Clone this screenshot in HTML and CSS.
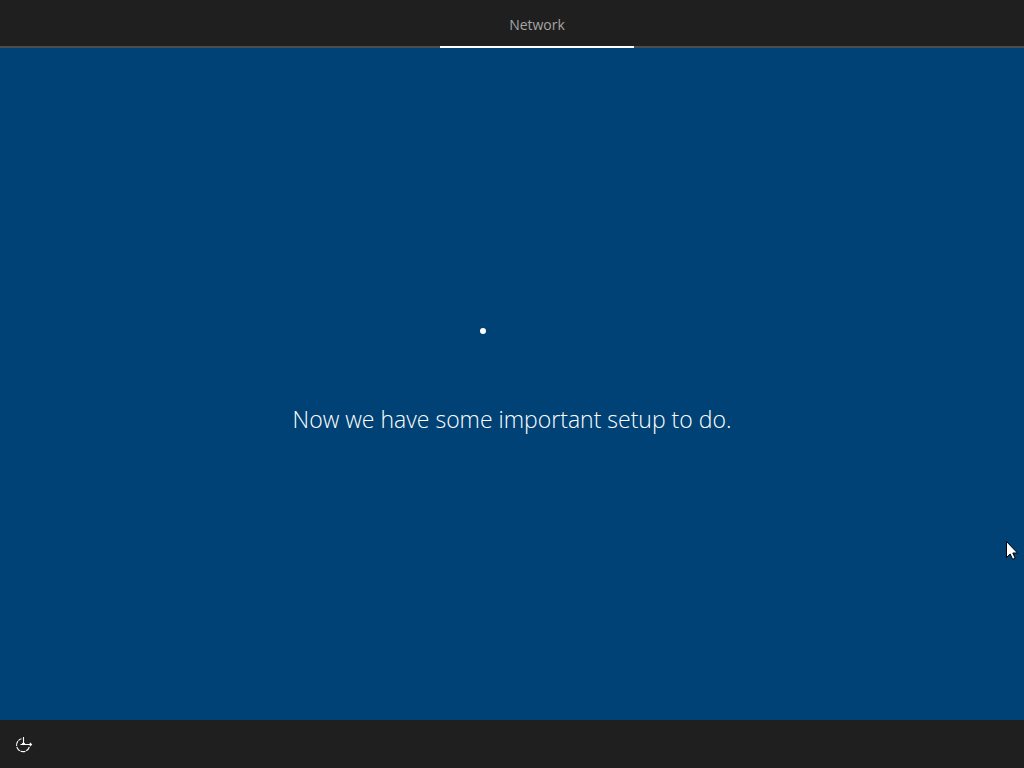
FILE: index.html
```html
<!DOCTYPE html>
<html lang="en">
<head>
<meta charset="utf-8">
<meta name="viewport" content="width=device-width, initial-scale=1">
<title>Setup</title>
<link rel="stylesheet" href="styles.css">
</head>
<body>
<div class="setup">
  <header class="steps">
    <h1 class="step">Network</h1>
  </header>
  <main class="stage">
    <div class="spinner"><span class="dot"></span></div>
    <p class="message">Now we have some important setup to do.</p>
  </main>
  <footer class="bar">
    <button class="tool" type="button" aria-label="Ease of access">
      <svg class="icon" viewBox="0 0 18 18" fill="none" stroke="#fff" stroke-width="1.1" aria-hidden="true">
        <path d="M14.3 12A6.5 6.5 0 1 1 6.5 3.8" stroke-dasharray="5 .8"/>
        <path d="M8.5 2v8M5.5 9.5h11M14.8 7.8l1.7 1.7-1.7 1.7M7.2 8.2l1.3 1.3 1.3-1.3"/>
      </svg>
    </button>
  </footer>
</div>
<svg class="cursor" viewBox="0 0 12 19" aria-hidden="true">
  <path d="M.5.5v16l3.7-3.5 2.4 5.3 2.6-1.1-2.4-5.2h4.7z" fill="#fff" stroke="#000"/>
</svg>
</body>
</html>
```

FILE: styles.css
```css
body {
  margin: 0;
  background: #004275;
  color: #fff;
  font-family: "Segoe UI", "Open Sans", "Noto Sans", sans-serif;
}
.setup {
  display: flex;
  flex-direction: column;
  min-height: 100vh;
}
.steps {
  display: flex;
  justify-content: center;
  padding-left: 50px;
  background: #1f1f1f;
  box-shadow: inset 0 -2px #4c4c4c;
}
.step {
  box-sizing: border-box;
  width: 194px;
  height: 48px;
  margin: 0;
  border-bottom: 2px solid #fff;
  color: #a5a5a5;
  font-size: 14px;
  font-weight: 400;
  line-height: 50px;
  text-align: center;
}
.stage {
  display: flex;
  flex: 1;
  flex-direction: column;
  align-items: center;
  justify-content: center;
  gap: 40px;
  padding-bottom: 34px;
}
.spinner {
  display: flex;
  align-items: center;
  width: 64px;
  height: 64px;
}
.dot {
  width: 6px;
  height: 6px;
  border-radius: 50%;
  background: #fff;
}
.message {
  margin: 0;
  font-size: 23px;
  font-weight: 300;
  line-height: 32px;
  text-align: center;
}
.bar {
  display: flex;
  background: #1f1f1f;
}
.tool {
  display: grid;
  place-items: center;
  width: 48px;
  height: 48px;
  padding: 0;
  border: 0;
  background: none;
}
.icon {
  width: 18px;
  height: 18px;
}
.cursor {
  position: absolute;
  top: 541px;
  right: 6px;
  width: 12px;
  height: 19px;
}
```
